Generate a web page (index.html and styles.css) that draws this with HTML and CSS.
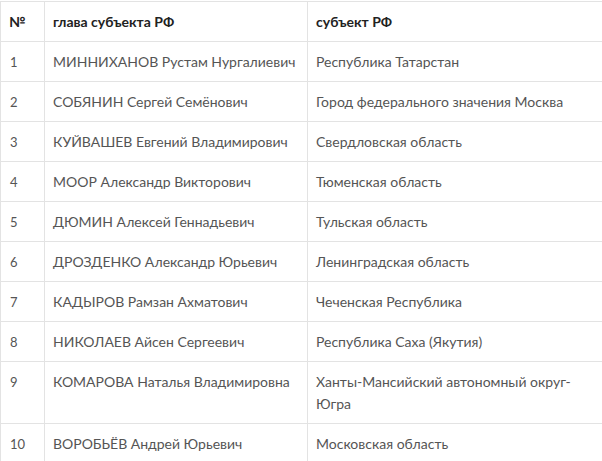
FILE: index.html
```html
<!DOCTYPE html>
<html lang="ru">
<head>
<meta charset="utf-8">
<title>Главы субъектов РФ</title>
<link rel="stylesheet" href="styles.css">
</head>
<body>
<table class="heads">
  <colgroup>
    <col class="c-num">
    <col class="c-name">
    <col class="c-region">
  </colgroup>
  <thead>
    <tr><th>№</th><th>глава субъекта РФ</th><th>субъект РФ</th></tr>
  </thead>
  <tbody>
    <tr><td>1</td><td>МИННИХАНОВ Рустам Нургалиевич</td><td>Республика Татарстан</td></tr>
    <tr><td>2</td><td>СОБЯНИН Сергей Семёнович</td><td>Город федерального значения Москва</td></tr>
    <tr><td>3</td><td>КУЙВАШЕВ Евгений Владимирович</td><td>Свердловская область</td></tr>
    <tr><td>4</td><td>МООР Александр Викторович</td><td>Тюменская область</td></tr>
    <tr><td>5</td><td>ДЮМИН Алексей Геннадьевич</td><td>Тульская область</td></tr>
    <tr><td>6</td><td>ДРОЗДЕНКО Александр Юрьевич</td><td>Ленинградская область</td></tr>
    <tr><td>7</td><td>КАДЫРОВ Рамзан Ахматович</td><td>Чеченская Республика</td></tr>
    <tr><td>8</td><td>НИКОЛАЕВ Айсен Сергеевич</td><td>Республика Саха (Якутия)</td></tr>
    <tr><td>9</td><td>КОМАРОВА Наталья Владимировна</td><td>Ханты-Мансийский автономный округ-Югра</td></tr>
    <tr><td>10</td><td>ВОРОБЬЁВ Андрей Юрьевич</td><td>Московская область</td></tr>
  </tbody>
</table>
</body>
</html>
```

FILE: styles.css
```css
html, body {
  margin: 0;
  padding: 0;
  background: #fff;
}
body {
  padding-top: 1px;
  overflow: hidden;
  font-family: Lato, "Open Sans", sans-serif;
  font-size: 14px;
  color: #555;
}
.heads {
  width: 100%;
  border-collapse: collapse;
  table-layout: fixed;
}
.c-num { width: 44px; }
.c-name { width: 263px; }
.heads th,
.heads td {
  border: 1px solid #e3e3e3;
  padding: 9px 8px 8px 8px;
  line-height: 22px;
  text-align: left;
  vertical-align: top;
}
.heads tr > :last-child { border-right: none; }
.heads th {
  font-weight: 700;
  color: #222;
}
.heads td:first-child {
  font-size: 13px;
  padding-left: 9px;
}
```
